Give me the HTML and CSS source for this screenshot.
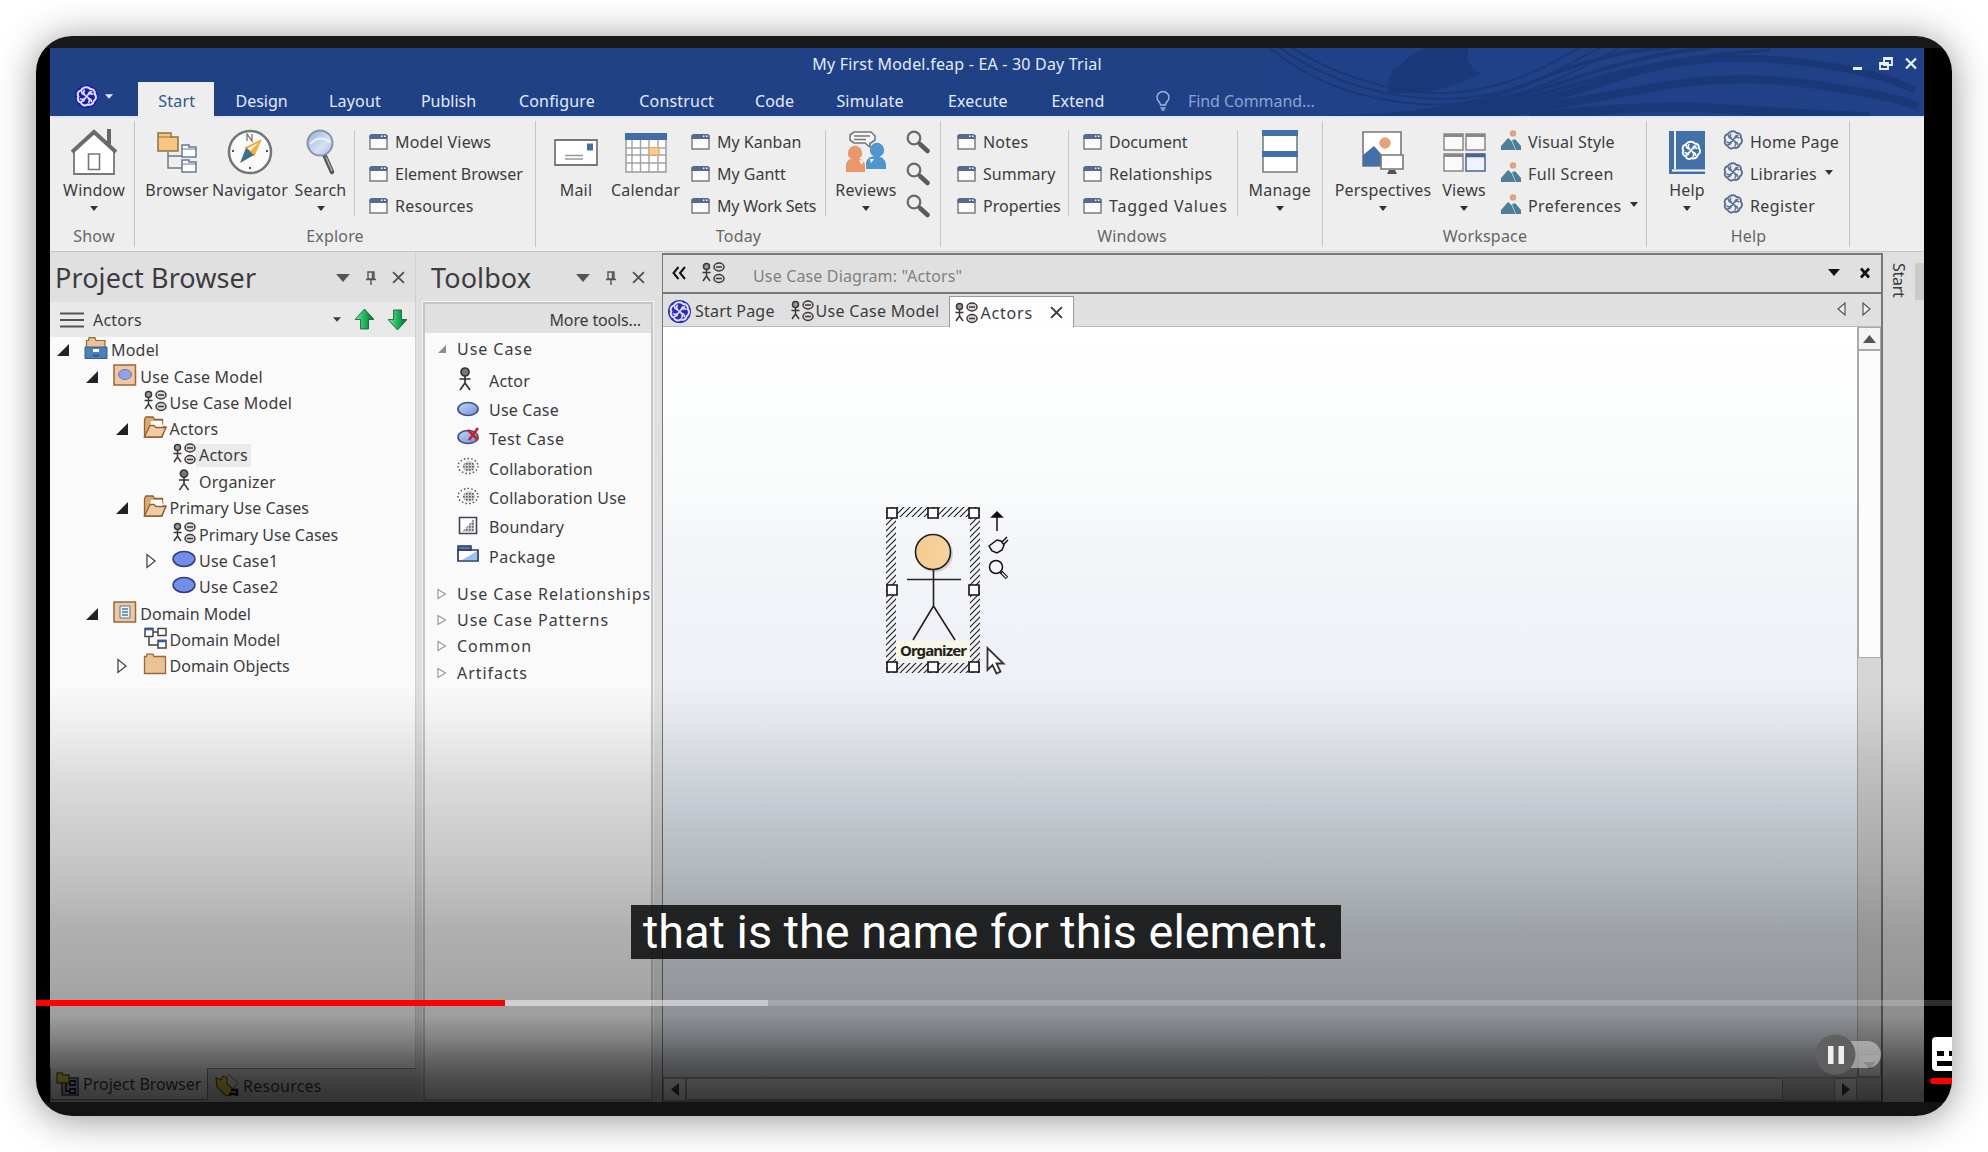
FILE: index.html
```html
<!DOCTYPE html>
<html lang="en">
<head>
<meta charset="utf-8">
<title>My First Model.feap - EA - 30 Day Trial</title>
<link rel="stylesheet" href="styles.css">
</head>
<body>
<svg class="defs" width="0" height="0">
  <defs>
    <linearGradient id="lens" x1="0" y1="0" x2="1" y2="1"><stop offset="0" stop-color="#8fb0e0"/><stop offset=".6" stop-color="#d3e0f5"/><stop offset="1" stop-color="#a9c0e6"/></linearGradient>
    <linearGradient id="oval" x1="0" y1="0" x2="1" y2="1"><stop offset="0" stop-color="#c3d4f6"/><stop offset="1" stop-color="#7191da"/></linearGradient>
    <linearGradient id="green" x1="0" x2="1"><stop offset="0" stop-color="#7fe6a0"/><stop offset=".5" stop-color="#1fb35a"/><stop offset="1" stop-color="#0a6a35"/></linearGradient>
    <linearGradient id="face"><stop offset="0" stop-color="#f6cb90"/><stop offset="1" stop-color="#f6d3a2"/></linearGradient>
    <pattern id="dots" width="3" height="3" patternUnits="userSpaceOnUse"><rect width="1.6" height="1.6" fill="#555"/></pattern>
    <pattern id="hatch" width="6" height="6" patternUnits="userSpaceOnUse"><path d="M-1 7L7-1M-1 1L1-1M5 7L7 5" stroke="#222" stroke-width="1.2"/></pattern>
  </defs>
  <symbol id="knot" viewBox="0 0 20 20"><g fill="none" stroke="currentColor" stroke-width="1.9"><path d="M6 2.6C8 .8 12 .8 13.6 3c2.7-.3 4.8 2 4.2 4.600c2 2.200 1.400 5.400-1 6.800c-.3 2.800-3.300 4.200-5.800 3.200c-2.200 1.700-5.600.9-6.400-1.800C2 15.200 1 12.200 2.300 10 .8 7.600 2 4.600 4.700 4.200z"/><path d="M10 10C7.500 9 6.500 6.500 8 3.500M10 10c1-2.500 3.500-3.500 6.500-2M10 10c2.500 1 3.500 3.500 2 6.500M10 10c-1 2.500-3.500 3.500-6.500 2M5.500 4.500C5 7 6.500 8.500 9 8M15.500 5.500C13 5 11.500 6.500 12 9M14.500 15.500C15 13 13.500 11.500 11 12M4.500 14.500C7 15 8.500 13.500 8 11" stroke-width="1.5"/></g></symbol>
  <symbol id="win" viewBox="0 0 19 16"><path d="M1 2h17v13H1z" fill="#fbfbfc" stroke="#7a7c80" stroke-width="1.5"/><path d="M.5 1.500L2 0h15l1.500 1.500V5H.5z" fill="#566a8f"/><path d="M12 1.500h1.500v1.500H12zM15 1.500h1.500v1.500H15z" fill="#fff"/></symbol>
  <symbol id="mag" viewBox="0 0 24 24"><circle cx="8" cy="8" r="6.300" fill="#eee" stroke="#6b6b6b" stroke-width="2.300"/><path d="M12 12l3 3" stroke="#5c5c5c" stroke-width="2.500"/><path d="M14.500 14.500l7 6.500" stroke="#5c5c5c" stroke-width="4.500" stroke-linecap="round"/></symbol>
  <symbol id="scene" viewBox="0 0 20 20"><circle cx="12" cy="3.400" r="3.200" fill="#dfa27d"/><path d="M0 20v-4l7-8 3.500 3 4 9zM11 10.500l3-1.500 6 7v4h-5z" fill="#4d8097"/></symbol>
  <symbol id="diag" viewBox="0 0 24 22"><g fill="none" stroke="#3b3838" stroke-width="1.500"><circle cx="5.500" cy="4.500" r="3" fill="#999"/><path d="M5.500 8v6.500M1.500 10.500h8M5.500 14l-3.500 5M5.500 14l3.500 5"/><ellipse cx="18" cy="5" rx="5" ry="3.900" fill="#ded6d6"/><ellipse cx="18" cy="16.500" rx="5" ry="3.900" fill="#ded6d6"/><path d="M15 5h6M15 16.500h6"/></g></symbol>
  <symbol id="actor" viewBox="0 0 14 24"><g fill="none" stroke="#333" stroke-width="1.700"><circle cx="7" cy="5" r="4" fill="#777"/><path d="M7 9v7.500M1.500 12h11M7 16l-5 7M7 16l5 7"/></g></symbol>
  <symbol id="folder" viewBox="0 0 24 22"><path d="M1.500 21V3.500L3 1h7l1.500 2.500h8V11h3L19 21z" fill="#e0a76c" stroke="#8c6236" stroke-width="1.300"/><path d="M8 5h11l1 6H7z" fill="#fff"/><path d="M1.500 21L7 9.500h4l2 2h10L18.500 21z" fill="#f3cba2" stroke="#8c6236" stroke-width="1.300"/></symbol>
  <symbol id="closed" viewBox="0 0 24 22"><path d="M1.500 20.500v-17h2L4 1.200h6l1 2.300h11.500v17z" fill="#ecc196" stroke="#946a3c" stroke-width="1.300"/></symbol>
  <symbol id="oval1" viewBox="0 0 22 16"><ellipse cx="11" cy="8" rx="10" ry="6.800" fill="#728ee8" stroke="#2f3d80" stroke-width="1.400"/></symbol>
  <symbol id="oval2" viewBox="0 0 22 16"><ellipse cx="11" cy="8" rx="10" ry="6.500" fill="url(#oval)" stroke="#41507c" stroke-width="1.700"/></symbol>
  <symbol id="open" viewBox="0 0 12 12"><path d="M12 0v12H0z" fill="#222"/></symbol>
  <symbol id="shut" viewBox="0 0 10 16"><path d="M1 1.500v13L9 8z" fill="#fff" stroke="#444" stroke-width="1.300"/></symbol>
  <symbol id="shutg" viewBox="0 0 10 12"><path d="M1 1.500v9L8.500 6z" fill="#fff" stroke="#999" stroke-width="1.200"/></symbol>
  <symbol id="down" viewBox="0 0 12 7"><path d="M0 0h12L6 7z" fill="currentColor"/></symbol>
  <symbol id="pin" viewBox="0 0 12 14"><path d="M3 1h6v7H3zM1 8.500h10M6 8.500V14M7.500 1v7" fill="none" stroke="#555" stroke-width="1.400"/></symbol>
  <symbol id="ex" viewBox="0 0 12 12"><path d="M1 1l10 10M11 1L1 11" fill="none" stroke="currentColor" stroke-width="1.800"/></symbol>
  <symbol id="exb" viewBox="0 0 12 12"><path d="M2 1.500l8 9M10 1.500l-8 9" fill="none" stroke="currentColor" stroke-width="2.700"/></symbol>
  <symbol id="collab" viewBox="0 0 22 18"><ellipse cx="11" cy="9" rx="10" ry="7.500" fill="none" stroke="#555" stroke-width="1.500" stroke-dasharray="1.500 2.200"/><ellipse cx="12" cy="9.500" rx="6" ry="5" fill="#ccc"/><ellipse cx="12" cy="9.500" rx="6" ry="5" fill="url(#dots)"/></symbol>
</svg>

<div class="frame">
 <div class="app">
  <header class="top">
    <svg class="waves" width="654" height="68" viewBox="0 0 654 68">
      <g fill="none" stroke="#193573" stroke-width="3.500" opacity=".8">
        <path d="M0 0Q60 50 150 56T330 10L350 0M10 0Q70 42 150 50T310 10L330 0M22 0Q80 36 150 44T300 5L310 0" stroke-width="1.800"/>
        <path d="M60 69Q180 69 260 35T400 0M90 69Q200 66 290 35T440 0M140 69Q230 60 310 35T500 2"/>
        <path d="M170 69Q260 60 340 32T510 12T645 42" stroke-width="7"/>
        <path d="M210 69Q300 55 380 40T540 36T648 58" stroke-width="8"/>
        <path d="M260 69Q380 56 440 60T600 69" stroke-width="9"/>
      </g>
      <path d="M118 44q0-24 12-27q14-14 27-17h42q-6 16 12 26-50 24-93 18z" fill="#193573" opacity=".65"/>
    </svg>
    <div class="titlebar">
      <span class="title">My First Model.feap - EA - 30 Day Trial</span>
      <svg class="wc" width="68" height="16" viewBox="0 0 68 16" fill="none" stroke="#e8f2ff"><path d="M2 12.500h9" stroke-width="3"/><path d="M33 2h8v7h-8zM33 3h8M29 7h8v6h-8zM29 8h8" stroke-width="1.800"/><path d="M55 2.500l10 10M65 2.500l-10 10" stroke-width="2.200"/></svg>
    </div>
    <nav class="menu">
      <span class="appbtn"><svg class="logo" width="25" height="25" viewBox="0 0 25 25"><circle cx="12.500" cy="12.500" r="11.500" fill="#1c1cb4"/><use href="#knot" x="2" y="2" width="21" height="21" color="#e8e4ff"/></svg><svg width="8" height="5"><use href="#down" width="8" height="5"/></svg></span>
      <span class="active">Start</span><span>Design</span><span>Layout</span><span>Publish</span><span>Configure</span><span>Construct</span><span>Code</span><span>Simulate</span><span>Execute</span><span>Extend</span>
      <span class="bulb"><svg width="14" height="20" viewBox="0 0 14 20" fill="none" stroke="#9fb6e0" stroke-width="1.400"><path d="M4.500 14C4.500 11 1 10 1 6.500a6 6 0 0 1 12 0C13 10 9.500 11 9.500 14zM4.500 17h5M5.500 19h3"/></svg></span>
      <span class="find">Find Command...</span>
    </nav>
  </header>

  <section class="ribbon">
    <div class="group g-show"><div class="gb">
      <div class="big"><svg width="46" height="46" viewBox="0 0 46 46"><path d="M3 21v24h40V21L23 4z" fill="#fff" stroke="#777" stroke-width="1.800"/><path d="M38 0v17" stroke="#666" stroke-width="4"/><path d="M1 23L23 3l22 20" fill="none" stroke="#6a6a6a" stroke-width="4"/><path d="M17.500 25h11v15.500h-11z" fill="#fff" stroke="#777" stroke-width="1.600"/></svg><b>Window</b><i></i></div>
    </div><div class="cap">Show</div></div>

    <div class="group g-explore"><div class="gb">
      <div class="big"><svg width="40" height="46" viewBox="0 -3 40 46"><path d="M11 20v16h14M11 24h14" fill="none" stroke="#777" stroke-width="1.500"/><path d="M1 1h13v4h7v14H1z" fill="#f8c77f" stroke="#8c7147" stroke-width="1.500"/><path d="M1 5h14" stroke="#8c7147"/><path d="M25 13h7v2h7v10H25zM25 28h7v2h7v10H25z" fill="#fff" stroke="#647995" stroke-width="1.500"/><path d="M25 17h14M25 32h14" stroke="#647995"/></svg><b>Browser</b></div>
      <div class="big"><svg width="46" height="46" viewBox="0 0 46 46"><circle cx="23" cy="23" r="21" fill="#fbfbfb" stroke="#757575" stroke-width="2.500"/><path d="M20 12V5l5 7V5" fill="none" stroke="#777" stroke-width="1.300"/><path d="M5 22h2M39 22h2M22 39h2" stroke="#555" stroke-width="2"/><path d="M33 12L19 19l8 7z" fill="#fff" stroke="#efa32c" stroke-width="1.800"/><path d="M33 12L23 22l4 4z" fill="#f6b13c"/><path d="M19 19l8 7-14 8z" fill="#39708f"/></svg><b>Navigator</b></div>
      <div class="big"><svg width="30" height="46" viewBox="0 0 30 46"><path d="M18 25l8 18" stroke="#555" stroke-width="4.500" stroke-linecap="round"/><path d="M20 28l6 14" stroke="#bbb" stroke-width="1.200"/><circle cx="14" cy="14" r="12.500" fill="url(#lens)" stroke="#8b94a6" stroke-width="2"/><path d="M4 15Q14 5 24 13" fill="none" stroke="#eef4fd" stroke-width="2"/></svg><b>Search</b><i></i></div>
      <ul class="list sep"><li><svg><use href="#win"/></svg>Model Views</li><li class="tight"><svg><use href="#win"/></svg>Element Browser</li><li><svg><use href="#win"/></svg>Resources</li></ul>
    </div><div class="cap">Explore</div></div>

    <div class="group g-today"><div class="gb">
      <div class="big"><svg width="44" height="46" viewBox="0 0 44 46"><path d="M1 11h42v25H1z" fill="#fff" stroke="#777" stroke-width="1.800"/><path d="M33 14.500h6v7h-6z" fill="#4a6fa5"/><path d="M11 26.500h18M11 30h18" stroke="#999" stroke-width="1.300"/></svg><b>Mail</b></div>
      <div class="big"><svg width="42" height="46" viewBox="0 0 42 46"><path d="M1 5h40v38H1z" fill="#fff" stroke="#999" stroke-width="1.400"/><path d="M1 19h40M1 26h40M1 34h40M7 10v33M15.500 10v33M24 10v33M33 10v33" stroke="#a2a2a2" stroke-width="1.400"/><path d="M0 4h42v7H0z" fill="#426ca8"/><path d="M24 18.500h10v7.500H24z" fill="#f8cb94" stroke="#e8a558" stroke-width="1.200"/></svg><b>Calendar</b></div>
      <ul class="list"><li class="tight"><svg><use href="#win"/></svg>My Kanban</li><li class="tight"><svg><use href="#win"/></svg>My Gantt</li><li class="tighter"><svg><use href="#win"/></svg>My Work Sets</li></ul>
      <div class="big sep"><svg width="40" height="46" viewBox="0 0 40 46"><path d="M8 3h17l4 4v4l-4 3h-1v4l-5-4H8l-4-3V6z" fill="#f6f6f6" stroke="#777" stroke-width="1.600"/><path d="M8 7h16M8 10.500h12" stroke="#777" stroke-width="1.300"/><circle cx="9" cy="24" r="7.200" fill="#e8986a"/><path d="M0 43V35q2-6 9-6t10 6v8z" fill="#e8986a"/><circle cx="31" cy="21" r="7.200" fill="#4f96cf"/><path d="M20 40v-7q2-6 10-6t10 8v5z" fill="#4f96cf"/><path d="M13 31l3 5 1-4zM24 30l1 4 3-4z" fill="#fff"/></svg><b>Reviews</b><i></i></div>
      <ul class="list mags"><li><svg><use href="#mag"/></svg></li><li><svg><use href="#mag"/></svg></li><li><svg><use href="#mag"/></svg></li></ul>
    </div><div class="cap">Today</div></div>

    <div class="group g-windows"><div class="gb">
      <ul class="list"><li><svg><use href="#win"/></svg>Notes</li><li class="tight"><svg><use href="#win"/></svg>Summary</li><li class="tight"><svg><use href="#win"/></svg>Properties</li></ul>
      <ul class="list sep"><li class="tight"><svg><use href="#win"/></svg>Document</li><li><svg><use href="#win"/></svg>Relationships</li><li class="loose"><svg><use href="#win"/></svg>Tagged Values</li></ul>
      <div class="big sep"><svg width="36" height="46" viewBox="0 0 36 46"><path d="M1 2h34v41H1z" fill="#fff" stroke="#7b7b7b" stroke-width="1.600"/><path d="M0 1h36v6H0zM0 22h36v6H0z" fill="#4470a8"/></svg><b>Manage</b><i></i></div>
    </div><div class="cap">Windows</div></div>

    <div class="group g-work"><div class="gb">
      <div class="big"><svg width="44" height="46" viewBox="0 0 44 46"><path d="M2 3h38v34H2z" fill="#fff" stroke="#777" stroke-width="1.600"/><circle cx="24" cy="14" r="5.700" fill="#e5a276"/><path d="M2 37V26l11-9 8 9v11z" fill="#4470a8"/><path d="M20 26h22v14H20z" fill="#fff" stroke="#777" stroke-width="1.600"/><path d="M28 41h6l2 4H26z" fill="#555"/></svg><b>Perspectives</b><i></i></div>
      <div class="big"><svg width="44" height="46" viewBox="0 0 44 46"><g fill="#fafafa" stroke="#888" stroke-width="1.500"><path d="M2 5h19v16H2zM24 5h19v16H24zM2 25h19v17H2z"/><path d="M2 6.500h19M24 6.500h19M2 26.500h19" stroke-width="3"/><path d="M24 25h19v17H24z" stroke="#4a6591" fill="#eef4ff"/><path d="M24 26.500h19" stroke="#4a6591" stroke-width="3.500"/></g></svg><b>Views</b><i></i></div>
      <ul class="list scenes"><li><svg><use href="#scene"/></svg>Visual Style</li><li class="roomy"><svg><use href="#scene"/></svg>Full Screen</li><li class="roomy"><svg><use href="#scene"/></svg>Preferences<i></i></li></ul>
    </div><div class="cap">Workspace</div></div>

    <div class="group g-help"><div class="gb">
      <div class="big"><svg width="36" height="46" viewBox="0 0 36 46"><path d="M0 2h36v43H0z" fill="#4470a8"/><path d="M6 2v38M3 41.500h33" stroke="#fff" stroke-width="1.800"/><use href="#knot" x="12" y="11" width="20" height="21" color="#fff"/></svg><b>Help</b><i></i></div>
      <ul class="list knots"><li><svg><use href="#knot"/></svg>Home Page</li><li><svg><use href="#knot"/></svg>Libraries<i></i></li><li class="roomy"><svg><use href="#knot"/></svg>Register</li></ul>
    </div><div class="cap">Help</div></div>
  </section>

  <main class="work">
    <aside class="browser">
      <div class="phead"><h2>Project Browser</h2><svg width="14" height="8"><use href="#down" width="14" height="8"/></svg><svg width="12" height="14"><use href="#pin"/></svg><svg width="13" height="13"><use href="#ex"/></svg></div>
      <div class="crumb"><svg width="24" height="16" viewBox="0 0 24 16"><path d="M0 1.500h24M0 8h24M0 14.500h24" stroke="#555" stroke-width="2"/></svg><span>Actors</span><svg width="8" height="5"><use href="#down" width="8" height="5"/></svg><svg width="19" height="21" viewBox="0 0 19 21"><path d="M9.500 0L19 10.500h-5.500V20h-8v-9.500H0z" fill="url(#green)" stroke="#0c5a30" stroke-width=".8"/></svg><svg width="19" height="21" viewBox="0 0 19 21"><path d="M9.500 21L19 10.500h-5.500V1h-8v9.500H0z" fill="url(#green)" stroke="#0c5a30" stroke-width=".8"/></svg></div>
      <ul class="tree">
        <li class="l0"><svg class="t"><use href="#open"/></svg><svg class="ic" viewBox="0 0 24 22"><path d="M2.500 12V3.500h2L5 .700h6l1 2.800h9V12z" fill="#ecc196" stroke="#946a3c" stroke-width="1.200"/><path d="M1 10h22v11.500H1z" fill="#4b7fb5" stroke="#33608e"/><path d="M9 12h6v3H9z" fill="#fff"/><path d="M10 17v2h4v-2" fill="none" stroke="#1d4268"/></svg>Model</li>
        <li class="l1"><svg class="t"><use href="#open"/></svg><svg class="ic" viewBox="0 0 24 22"><path d="M1 1h21.500v20H1z" fill="#f0c79e" stroke="#946a3c" stroke-width="1.500"/><ellipse cx="12" cy="10.500" rx="6.500" ry="5" fill="#8fa2ea" stroke="#6c78b8"/></svg>Use Case Model</li>
        <li class="l2"><svg class="t"></svg><svg class="ic"><use href="#diag"/></svg>Use Case Model</li>
        <li class="l2"><svg class="t"><use href="#open"/></svg><svg class="ic"><use href="#folder"/></svg>Actors</li>
        <li class="l3"><svg class="t"></svg><svg class="ic"><use href="#diag"/></svg><span class="sel">Actors</span></li>
        <li class="l3"><svg class="t"></svg><svg class="ic"><use href="#actor"/></svg>Organizer</li>
        <li class="l2 tight"><svg class="t"><use href="#open"/></svg><svg class="ic"><use href="#folder"/></svg>Primary Use Cases</li>
        <li class="l3 tight"><svg class="t"></svg><svg class="ic"><use href="#diag"/></svg>Primary Use Cases</li>
        <li class="l3"><svg class="t s"><use href="#shut"/></svg><svg class="ic"><use href="#oval1"/></svg>Use Case1</li>
        <li class="l3"><svg class="t"></svg><svg class="ic"><use href="#oval1"/></svg>Use Case2</li>
        <li class="l1 tight"><svg class="t"><use href="#open"/></svg><svg class="ic" viewBox="0 0 24 22"><path d="M1 1h21.500v20H1z" fill="#f0c79e" stroke="#946a3c" stroke-width="1.500"/><path d="M7 5h10v12H7z" fill="#e8f4fb" stroke="#567a90"/><path d="M9 8h6M9 11h6M9 14h6" stroke="#567a90" stroke-width="1.300"/></svg>Domain Model</li>
        <li class="l2 tight"><svg class="t"></svg><svg class="ic" viewBox="0 0 24 22"><g fill="#fff" stroke="#444" stroke-width="1.500"><path d="M10 5h6M6 9v9h9" fill="none"/><path d="M2 1.500h8v8H2zM15 1.500h8v7h-8zM15 13.500h8v7.500h-8z"/><path d="M2 2h8M15 14h8" stroke="#3556a8" stroke-width="2.400"/></g></svg>Domain Model</li>
        <li class="l2 tight"><svg class="t s"><use href="#shut"/></svg><svg class="ic"><use href="#closed"/></svg>Domain Objects</li>
      </ul>
      <div class="ptabs">
        <span class="on"><svg width="23" height="24" viewBox="0 0 23 24"><path d="M6 6h16v17H6z" fill="#aab3e0" stroke="#3b437c" stroke-width="1.500"/><path d="M10 11v8h4M14 9h5v4h-5zM14 17h5v4h-5z" fill="#dde" stroke="#223" stroke-width="1.800"/><path d="M1 1h5l1 2h6v8H1z" fill="#e6d94a" stroke="#6d6518" stroke-width="1.300"/></svg>Project Browser</span>
        <span><svg width="24" height="24" viewBox="0 0 24 24"><path d="M9 6l5-5 9 8-6 7z" fill="#ddd" stroke="#777"/><path d="M1 4l5 2 2-4 4 2v6l6 5-3 7-5-1-8-8z" fill="#e3cf3e" stroke="#6d6518" stroke-width="1.300"/><path d="M14 20h8M16 16h6v6" stroke="#111" stroke-width="2.500" fill="none"/></svg>Resources</span>
      </div>
    </aside>

    <aside class="toolbox">
      <div class="phead"><h2>Toolbox</h2><svg width="14" height="8"><use href="#down" width="14" height="8"/></svg><svg width="12" height="14"><use href="#pin"/></svg><svg width="13" height="13"><use href="#ex"/></svg></div>
      <div class="tbody">
        <div class="more">More tools...</div>
        <div class="cat first"><svg width="8" height="8"><use href="#open" width="8" height="8" opacity=".5"/></svg>Use Case</div>
        <ul class="tools">
          <li><svg viewBox="0 0 22 24"><use href="#actor" x="1" width="14" height="24"/></svg>Actor</li>
          <li><svg viewBox="0 0 22 24"><use href="#oval2" y="4" width="22" height="16"/></svg>Use Case</li>
          <li class="roomy"><svg viewBox="0 0 22 24"><use href="#oval2" y="3" width="22" height="16"/><path d="M11 4l10 10M21 2L12 14" stroke="#c3212c" stroke-width="2.600"/></svg>Test Case</li>
          <li><svg viewBox="0 0 22 24"><use href="#collab" y="2" width="22" height="18"/></svg>Collaboration</li>
          <li><svg viewBox="0 0 22 24"><use href="#collab" y="2" width="22" height="18"/></svg>Collaboration Use</li>
          <li><svg viewBox="0 0 22 24"><path d="M2.500 3.500h17v16h-17z" fill="#fff" stroke="#3e435c" stroke-width="1.600"/><path d="M17 5v13H5z" fill="#c9cbd6"/><path d="M17 5v13H5z" fill="url(#dots)"/></svg>Boundary</li>
          <li class="roomy"><svg viewBox="0 0 22 24"><path d="M1 7h20v11H1z" fill="#fff" stroke="#273a63" stroke-width="1.700"/><path d="M20 8v9H5z" fill="#9fc0f0"/><path d="M1 3h13v4H1z" fill="#5874a8" stroke="#273a63" stroke-width="1.500"/></svg>Package</li>
        </ul>
        <div class="cat"><svg width="10" height="12"><use href="#shutg"/></svg>Use Case Relationships</div>
        <div class="cat"><svg width="10" height="12"><use href="#shutg"/></svg>Use Case Patterns</div>
        <div class="cat"><svg width="10" height="12"><use href="#shutg"/></svg>Common</div>
        <div class="cat"><svg width="10" height="12"><use href="#shutg"/></svg>Artifacts</div>
      </div>
    </aside>

    <section class="doc">
      <div class="dhead"><svg width="14" height="14" viewBox="0 0 14 14" fill="none" stroke="#111" stroke-width="2"><path d="M6.500 1l-5 6 5 6M13 1L8 7l5 6"/></svg><svg width="24" height="22"><use href="#diag"/></svg><span>Use Case Diagram: "Actors"</span><svg width="12" height="7" class="push"><use href="#down"/></svg><svg width="12" height="12"><use href="#exb"/></svg></div>
      <div class="dtabs">
        <span class="dt"><svg class="logo2" width="25" height="25" viewBox="0 0 25 25"><circle cx="12.500" cy="12.500" r="11.500" fill="#2a2ab8"/><use href="#knot" x="2" y="2" width="21" height="21" color="#e4e0ff"/></svg>Start Page</span>
        <span class="dt two"><svg width="24" height="22"><use href="#diag"/></svg>Use Case Model</span>
        <span class="dt cur"><svg width="24" height="22"><use href="#diag"/></svg>Actors<svg class="x" width="13" height="13"><use href="#ex"/></svg></span>
        <svg class="push" width="34" height="14" viewBox="0 0 34 14" fill="#eee" stroke="#555" stroke-width="1.200"><path d="M8 1v12L1 7zM26 1v12l7-6z"/></svg>
      </div>
      <div class="dbody">
        <div class="canvas">
          <svg class="element" width="94" height="166" viewBox="0 0 94 166">
            <path d="M0 0h94v166H0zM10 10v146h74V10z" fill="url(#hatch)" fill-rule="evenodd"/>
            <circle cx="49" cy="47" r="18" fill="#bbb" opacity=".6"/>
            <circle cx="47" cy="45" r="17.500" fill="url(#face)" stroke="#222" stroke-width="1.600"/>
            <path d="M47.500 63v36M21 72.500h54M47.500 99L27 133M47.500 99L69 133" stroke="#222" stroke-width="1.600" fill="none"/>
            <g fill="#fff" stroke="#111" stroke-width="1.600"><path d="M1 1h10v10H1zM42 1h10v10H42zM83 1h10v10H83zM1 78h10v10H1zM83 78h10v10H83zM1 155h10v10H1zM42 155h10v10H42zM83 155h10v10H83z"/></g>
          </svg>
          <span class="ename">Organizer</span>
          <svg class="quick" width="22" height="70" viewBox="0 0 22 70" fill="none" stroke="#111" stroke-width="1.500"><path d="M9 3v17"/><path d="M9 1l5 5H4z" fill="#111"/><path d="M1 35l8-6 4 1 3 4-2 5-5 3-5-2zM14 31l5-5M16 33l4-4"/><circle cx="8" cy="56" r="6.500"/><path d="M13 61l6 6" stroke-width="3.600"/><path d="M14 62l4.500 4.500" stroke="#fff" stroke-width="1.200"/></svg>
          <svg class="cursor" width="20" height="30" viewBox="0 0 20 30"><path d="M1.500 2v22l5-5 4 8.500 4-2-4-8h7z" fill="#fff" stroke="#333" stroke-width="1.800"/></svg>
        </div>
        <div class="vscroll"><span class="sb"><svg width="13" height="8" viewBox="0 0 13 8"><path d="M0 8h13L6.500 0z" fill="#555"/></svg></span><span class="vthumb"></span><span class="sb end"><svg width="13" height="7"><use href="#down"/></svg></span></div>
        <div class="hscroll"><span class="sb"><svg width="8" height="13" viewBox="0 0 8 13"><path d="M8 0v13L0 6.500z" fill="#444"/></svg></span><span class="hthumb"></span><span class="sb end"><svg width="8" height="13" viewBox="0 0 8 13"><path d="M0 0v13l8-6.500z" fill="#444"/></svg></span></div>
      </div>
    </section>
    <div class="side"><span>Start</span></div>
  </main>
 </div>

 <div class="shade"></div>
 <div class="caption">that is the name for this element.</div>
 <div class="progress"><div class="buffered"></div><div class="played"></div></div>
 <div class="toggle"></div>
 <svg class="pause" width="41" height="41" viewBox="0 0 41 41"><circle cx="20.500" cy="20.500" r="20" fill="#606060"/><path d="M13 12h5.500v18H13zM23.500 12h5.500v18h-5.500z" fill="#eee"/></svg>
 <svg class="cc" width="24" height="48" viewBox="0 0 24 48"><rect x="2" width="40" height="34" rx="4" fill="#fff"/><path d="M7 14h7v5H7zM19 14h5v5h-5zM7 24h17v5H7z" fill="#000"/><rect y="41" width="40" height="6" rx="3" fill="#f00"/></svg>
</div>
</body>
</html>
```
FILE: styles.css
```css
* { box-sizing: border-box; }
body { margin: 0; padding: .1px 0 0; width: 1988px; height: 1152px; overflow: hidden; background: #fff; font: 16px/20px "Noto Sans", sans-serif; letter-spacing: .2px; color: #3c3c3e; }
ul { list-style: none; margin: 0; padding: 0; }
svg { display: block; flex: none; }
.defs { position: absolute; }
.frame { position: relative; width: 1916px; height: 1080px; margin: 36px; padding: 12px 28px 14px 14px; border-radius: 36px; overflow: hidden; background: linear-gradient(#191919 12px, #000 12px 1066px, #131313 1066px); }
body::before { content: ""; position: absolute; z-index: -1; left: 36px; top: 36px; width: 1916px; height: 1080px; border-radius: 36px; box-shadow: 0 3px 38px rgba(0,0,0,.43); }
.app { height: 1054px; width: 1874px; display: flex; flex-direction: column; background: #e0e0e0; overflow: hidden; }
.tight { letter-spacing: 0; }
.tighter { letter-spacing: -.2px; }
.roomy { letter-spacing: .4px; }
.loose { letter-spacing: .8px; }

.top { position: relative; height: 70px; background: #214187; border-bottom: 2px solid #dde8f8; color: #e2ecfa; flex: none; }
.waves { position: absolute; right: 0; top: 0; }
.titlebar { position: relative; height: 34px; display: flex; align-items: center; justify-content: center; }
.title { margin: -2px 60px 0 0; }
.wc { position: absolute; right: 5px; top: 8px; }
.menu { position: relative; height: 34px; display: grid; grid-template-columns: 88px 75.500px 22px 93.400px 92px 98px 120.300px 115.700px 81.500px 111.500px 103.500px 104.500px 32px auto; line-height: 39px; }
.menu > span { white-space: nowrap; }
.menu > span:nth-child(3) { grid-column: 4; }
.menu > span:nth-child(3), .menu > span:nth-child(5) { letter-spacing: 0; }
.menu .active { background: #eee; color: #2a5698; text-align: center; height: 36px; padding-left: 2px; }
.appbtn { display: flex; align-items: center; gap: 6px; padding: 0 0 10px 24px; }
.bulb svg { margin-top: 9px; }
.find { color: #8ba3d3; letter-spacing: -.05px; }

.ribbon { height: 134px; flex: none; display: flex; background: #eeeeee; border-bottom: 1px solid #c4c4c4; }
.group { position: relative; border-right: 1px solid #c6c6c6; margin: 3px 0 5px; height: 126px; }
.gb { display: grid; height: 101px; }
.cap { text-align: center; color: #666; line-height: 28px; }
.big { display: flex; flex-direction: column; align-items: center; height: 86px; margin-top: 9px; }
.big b { font-weight: 400; line-height: 22px; margin-top: 4px; white-space: nowrap; }
.big i, .list i { width: 0; border: 4px solid transparent; border-top: 5px solid #333; border-bottom: 0; margin-top: 5px; }
.big > svg { margin-top: -1px; }
.sep { border-left: 1px solid #c6c6c6; height: 86px; }
.list { margin-top: 9px; height: 86px; padding-left: 14px; }
.list li { height: 32px; display: flex; align-items: center; gap: 7px; white-space: nowrap; position: relative; top: -4px; }
.list svg { width: 19px; height: 16px; }
.list i { margin: -4px 0 0 1px; }
.mags svg { width: 24px; height: 24px; }
.scenes svg, .knots svg { width: 20px; height: 20px; margin-top: -4px; }
.knots svg { color: #5a7096; }
.g-show { width: 85px; padding-left: 4px; }
.g-explore { width: 401px; }
.g-explore .gb { grid-template-columns: 72px 74px 67px auto; padding-left: 6px; }
.g-today { width: 405px; padding-left: 1px; }
.g-today .gb { grid-template-columns: 56px 83px 138px 81px auto; padding-left: 11px; }
.g-today .list { padding-left: 4px; } .g-today .mags { padding-left: 0; }
.g-windows { width: 382px; padding-left: 1px; }
.g-windows .gb { grid-template-columns: 126px 168.500px auto; }
.g-windows .list:first-child { padding-left: 15px; }
.g-work { width: 324px; padding-left: 1px; }
.g-work .gb { grid-template-columns: 106px 56px auto; padding-left: 6px; }
.g-work .list { padding-left: 9px; }
.g-help { width: 203px; padding-left: 1px; }
.g-help .gb { grid-template-columns: 62px auto; padding-left: 8px; }
.g-help .list { padding-left: 5px; }

.work { flex: 1; display: grid; grid-template-columns: 366px 7px 230px 9px 1221px 41px; min-height: 0; padding-top: 1px; }
.browser { grid-column: 1; display: flex; flex-direction: column; border-right: 1px solid #d0d0d0; min-height: 0; }
.phead { height: 49px; flex: none; display: flex; align-items: center; gap: 15px; padding: 0 10px 0 5px; color: #555; }
.phead h2 { margin: 0 auto 0 0; font-size: 27px; font-weight: 400; letter-spacing: .1px; color: #3c3c40; line-height: 40px; }
.crumb { height: 35px; flex: none; display: flex; align-items: center; gap: 14px; padding: 0 8px 0 10px; background: #e9e9e9; }
.crumb span { margin: 0 auto 0 -5px; }
.tree { flex: 1; background: #fafafa; }
.tree li { height: 26.350px; display: flex; align-items: center; white-space: nowrap; }
.t { width: 12px; height: 12px; margin-right: 15px; }
.t.s { width: 12px; height: 16px; }
.ic { width: 24px; height: 22px; margin: -4px 3px 0 0; }
.l0 { padding-left: 7px; } .l1 { padding-left: 36.300px; } .l2 { padding-left: 65.600px; } .l3 { padding-left: 95px; }
.sel { background: #ebebeb; padding: 1px 3px 2px; margin-left: -3px; }
.ptabs { height: 34px; flex: none; display: flex; background: #d8d8d8; border-top: 1px solid #999; }
.ptabs span { display: flex; align-items: center; gap: 4px; padding: 0 7px; white-space: nowrap; }
.ptabs .on { width: 158px; background: #f0f0f0; border: 1px solid #888; border-top: 0; margin: -1px 0 2px; letter-spacing: 0; padding: 0 5px; }

.toolbox { grid-column: 3; display: flex; flex-direction: column; min-height: 0; }
.toolbox .phead { padding-left: 8px; padding-right: 8px; }
.tbody { flex: 1; border: 2px solid #c6c6c6; border-bottom-width: 3px; background: #fafafa; outline: 1px solid #f2f2f2; overflow: hidden; }
.more { height: 29px; line-height: 32px; background: #e0e0e0; text-align: right; padding-right: 10px; letter-spacing: -.15px; }
.cat { height: 26.400px; display: flex; align-items: center; gap: 10px; padding-left: 12px; letter-spacing: .95px; white-space: nowrap; }
.cat.first { height: 31px; gap: 11px; }
.cat.first svg { margin-left: 1px; }
.tools { padding: 2px 0 9px 32px; }
.tools li { height: 29.330px; display: flex; align-items: center; gap: 10px; letter-spacing: .2px; white-space: nowrap; }
.tools li.roomy { letter-spacing: .6px; }
.tools svg { width: 22px; height: 24px; margin-top: -3px; }

.doc { grid-column: 5; display: flex; flex-direction: column; border: 2px solid #777; border-bottom: 0; border-left-width: 1px; min-height: 0; }
.dhead { height: 39px; flex: none; display: flex; align-items: center; padding: 0 10px 2px 9px; border-bottom: 2px solid #777; color: #111; }
.dhead span { color: #808080; margin: 6px 0 0 28px; letter-spacing: .15px; }
.dhead svg + svg { margin-left: 15px; }
.dhead svg.push { margin-left: auto; } .dhead svg.push + svg { margin-left: 19px; }
.dtabs { height: 33px; flex: none; display: flex; align-items: center; border-bottom: 1px solid #bbb; padding: 0 10px 0 4px; }
.dtabs .push { margin: -3px 0 0 auto; }
.dt { display: flex; align-items: center; gap: 3px; height: 30px; margin-top: 2px; white-space: nowrap; }
.two { margin-left: 15px; letter-spacing: .3px; gap: 2px; }
.cur { background: #fdfdfd; border: 1px solid #999; border-bottom: 0; height: 31px; width: 125px; margin-left: 10px; padding: 2px 0 0 4px; letter-spacing: .8px; gap: 2px; }
.cur .x { margin-left: 15px; }
.dbody { flex: 1; display: grid; grid-template: 1fr 25px / 1fr 24px; min-height: 0; }
.canvas { position: relative; background: linear-gradient(#fff, #fafcfc 150px, #f3f5f9 220px, #eef0f6 380px, #e8eef7 480px, #e1e9ef 570px, #e2e6f0 640px, #dbe2e8); }
.element { position: absolute; left: 223px; top: 180px; }
.ename { position: absolute; left: 233px; top: 314px; width: 74px; text-align: center; font: bold 15px/18px "Noto Sans", sans-serif; letter-spacing: -.9px; color: #222; background: #f8f8e6; }
.quick { position: absolute; left: 325px; top: 184px; }
.cursor { position: absolute; left: 323px; top: 319px; }
.vscroll { display: flex; flex-direction: column; background: #d6d6d6; border-left: 1px solid #aaa; }
.sb { width: 23px; height: 23px; flex: none; display: flex; align-items: center; justify-content: center; background: #f4f4f4; border: 1px solid #aaa; color: #444; }
.vthumb { height: 308px; background: #fcfcfc; border: 1px solid #aaa; }
.vscroll .end { margin-top: auto; }
.hscroll { grid-column: 1 / 3; display: flex; background: #d6d6d6; border: solid #aaa; border-width: 1px 0 2px; padding-right: 24px; }
.hthumb { width: 1097px; background: #f4f4f4; border: 1px solid #aaa; }
.hscroll .end { margin-left: auto; }
.side { grid-column: 6; display: flex; justify-content: space-between; padding: 10px 0 0 5px; }
.side span { writing-mode: vertical-rl; line-height: 22px; letter-spacing: -.3px; }
.side::after { content: ""; width: 9px; height: 37px; background: #cbcbcb; }

.shade { position: absolute; inset: 12px 28px 14px 14px; background: linear-gradient(transparent 635px, rgba(0,0,0,.04) 671px, rgba(0,0,0,.115) 726px, rgba(0,0,0,.17) 775px, rgba(0,0,0,.22) 825px, rgba(0,0,0,.3) 885px, rgba(0,0,0,.33) 930px, rgba(0,0,0,.37) 968px, rgba(0,0,0,.49) 992px, rgba(0,0,0,.61) 1012px, rgba(0,0,0,.71) 1034px, rgba(0,0,0,.77) 1054px); }
.caption { position: absolute; left: 595px; top: 869px; width: 710px; height: 54px; background: rgba(8,8,8,.84); color: #fff; font: 46.800px/55px Roboto, sans-serif; letter-spacing: 0; text-align: center; white-space: nowrap; }
.progress { position: absolute; left: 0; top: 964px; width: 1916px; height: 6px; background: rgba(255,255,255,.18); }
.progress div { position: absolute; left: 0; top: 0; height: 6px; }
.buffered { width: 732px; background: rgba(255,255,255,.4); }
.played { width: 469px; background: #f00; }
.toggle { position: absolute; left: 1800px; top: 1005px; width: 45px; height: 27px; border-radius: 14px; background: rgba(205,205,205,.62); }
.pause { position: absolute; left: 1778.500px; top: 997.500px; }
.cc { position: absolute; left: 1894px; top: 1001px; }
```
